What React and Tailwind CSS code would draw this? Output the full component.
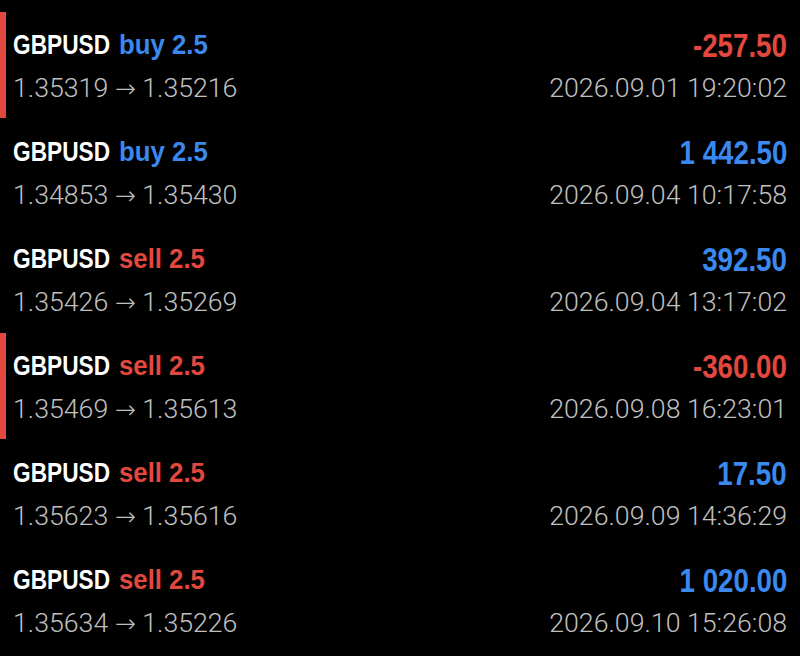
import React from "react";

const rows = [
  { side: "buy", from: "1.35319", to: "1.35216", pl: "-257.50", date: "2026.09.01 19:20:02", bar: true },
  { side: "buy", from: "1.34853", to: "1.35430", pl: "1 442.50", date: "2026.09.04 10:17:58", bar: false },
  { side: "sell", from: "1.35426", to: "1.35269", pl: "392.50", date: "2026.09.04 13:17:02", bar: false },
  { side: "sell", from: "1.35469", to: "1.35613", pl: "-360.00", date: "2026.09.08 16:23:01", bar: true },
  { side: "sell", from: "1.35623", to: "1.35616", pl: "17.50", date: "2026.09.09 14:36:29", bar: false },
  { side: "sell", from: "1.35634", to: "1.35226", pl: "1 020.00", date: "2026.09.10 15:26:08", bar: false },
];

const BLUE = "text-[#3b88ee]";
const RED = "text-[#e2483e]";
const TITLE_FONT = { fontFamily: '"Liberation Sans", Arial, sans-serif' };
const SUB_FONT = { fontFamily: 'Roboto, "Liberation Sans", sans-serif' };
const ARROW_FONT = { fontFamily: '"DejaVu Sans", sans-serif' };

export default function App() {
  return (
    <div className="w-[800px] h-[656px] bg-black overflow-hidden pt-[12px]">
      {rows.map((r, i) => {
        const neg = r.pl.startsWith("-");
        return (
          <div key={i} className="relative h-[107px] flex justify-between pl-[13px] pr-[13px]">
            {r.bar && <div className="absolute left-0 top-0 w-[6px] h-[106px] bg-[#e2483e]" />}
            <div className="flex flex-col items-start">
              <div
                className="mt-[15px] h-[36px] leading-[36px] text-[28px] font-bold text-white whitespace-nowrap flex"
                style={TITLE_FONT}
              >
                <span className="inline-block w-[106px]">
                  <span className="inline-block scale-x-[0.81] origin-left">GBPUSD</span>
                </span>
                <span className={`inline-block scale-x-[0.92] origin-left ${r.side === "buy" ? BLUE : RED}`}>
                  {r.side} 2.5
                </span>
              </div>
              <div
                className="mt-[8px] h-[34px] leading-[34px] text-[26.7px] font-light text-[#c0c0c0] whitespace-nowrap"
                style={SUB_FONT}
              >
                {r.from} <span className="font-extralight text-[25px]" style={ARROW_FONT}>→</span> {r.to}
              </div>
            </div>
            <div className="flex flex-col items-end">
              <div
                className={`mt-[16px] h-[36px] leading-[36px] text-[33px] font-bold whitespace-nowrap scale-x-[0.84] origin-right ${neg ? RED : BLUE}`}
                style={TITLE_FONT}
              >
                {r.pl}
              </div>
              <div
                className="mt-[7px] h-[34px] leading-[34px] text-[26.7px] font-light text-[#c0c0c0] whitespace-nowrap"
                style={SUB_FONT}
              >
                {r.date}
              </div>
            </div>
          </div>
        );
      })}
    </div>
  );
}
